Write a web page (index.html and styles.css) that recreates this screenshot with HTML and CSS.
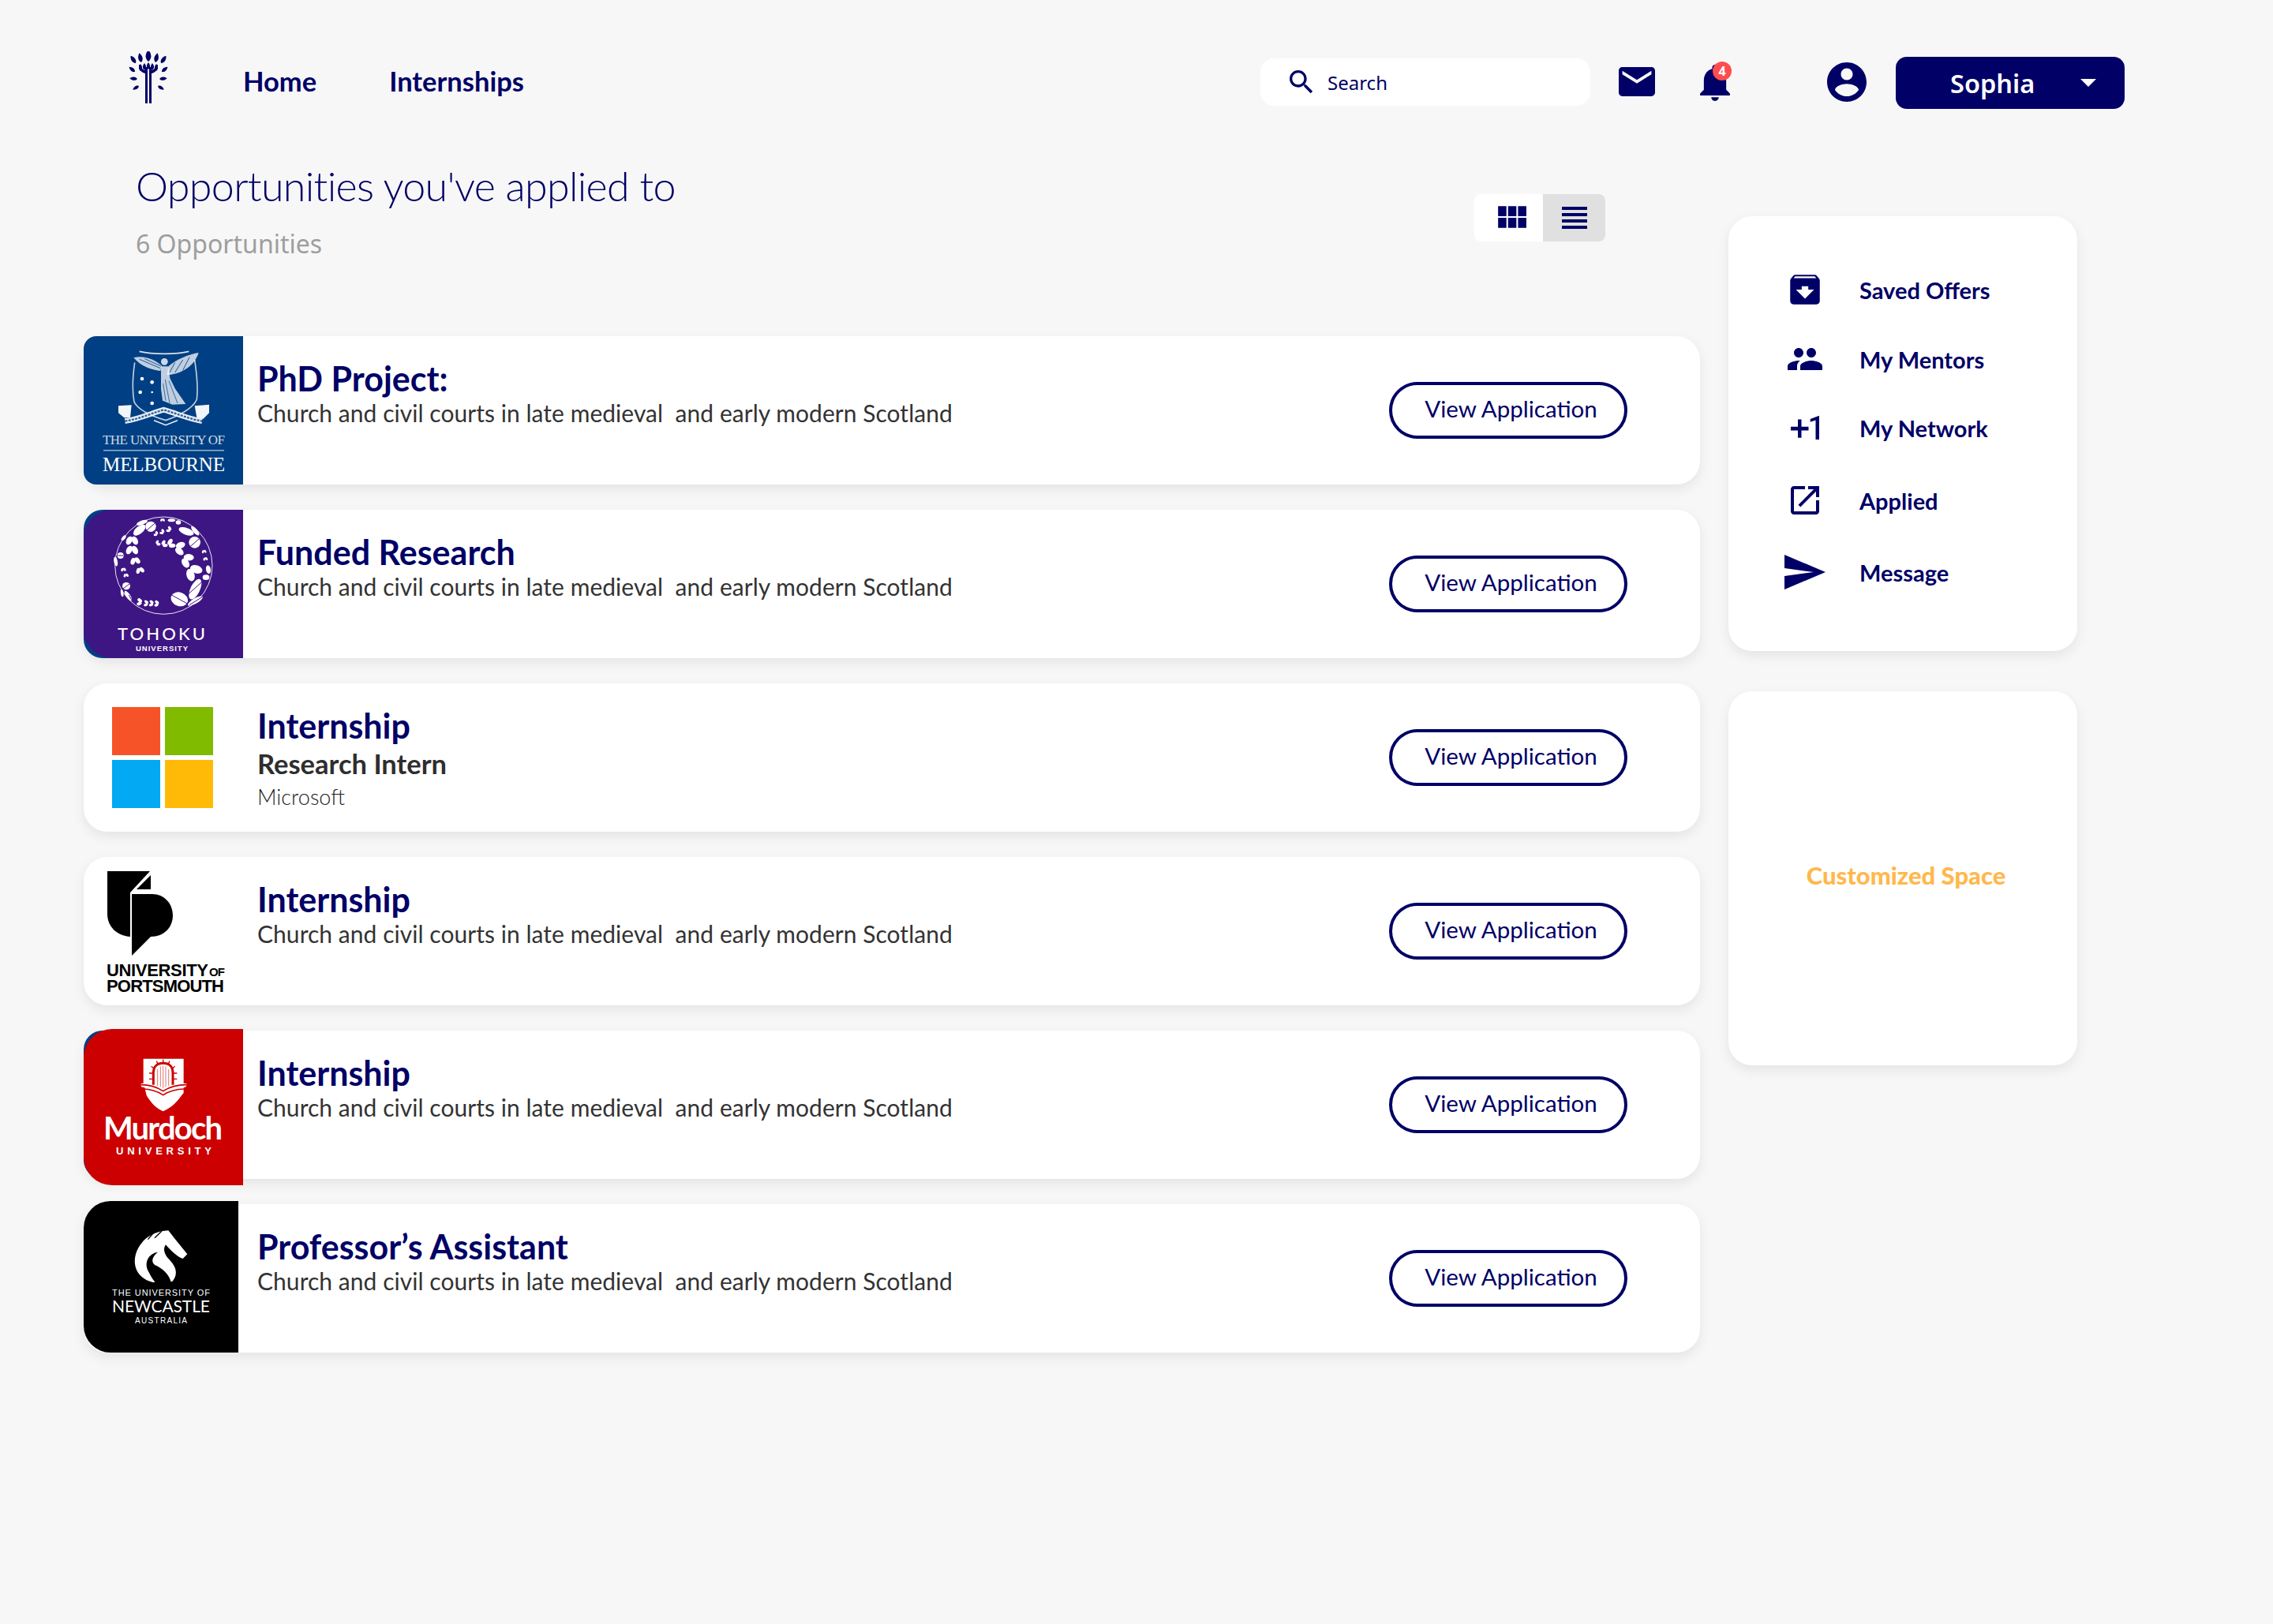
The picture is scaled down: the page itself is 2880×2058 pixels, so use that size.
FILE: index.html
```html
<!DOCTYPE html>
<html lang="en">
<head>
    <meta charset="UTF-8">
    <meta name="viewport" content="width=device-width, initial-scale=1.0">
    <title>Opportunities you've applied to</title>
    <link rel="stylesheet" href="styles.css">
</head>
<body>

    <svg class="defs" width="0" height="0">
        <defs>
            <path id="flame" d="M0 0C-5 -4 -4 -10 0 -15C4 -10 5 -4 0 0Z"/>
            <g id="heart">
                <ellipse cx="-9" cy="-11" rx="9" ry="14" transform="rotate(-28 -9 -11)"/>
                <ellipse cx="9" cy="-11" rx="9" ry="14" transform="rotate(28 9 -11)"/>
            </g>
        </defs>
    </svg>

    <header class="topbar">
        <a class="brand" href="#">
            <svg width="52" height="66" viewBox="0 0 52 66" fill="#000066">
                <path d="M22 66V28C17 27 14 23 14 17H17C17 21 19 24 22 24V20H25V66ZM27 66V20H30V24C33 24 35 21 35 17H38C38 23 35 27 30 28V66Z"/>
                <use href="#flame" transform="translate(26 13)"/>
                <use href="#flame" transform="translate(17 14) rotate(-12) scale(.8)"/>
                <use href="#flame" transform="translate(35 14) rotate(12) scale(.8)"/>
                <use href="#flame" transform="translate(10 15) rotate(-35) scale(.75)"/>
                <use href="#flame" transform="translate(42 15) rotate(35) scale(.75)"/>
                <use href="#flame" transform="translate(21 24) scale(.6)"/>
                <use href="#flame" transform="translate(26 23) scale(.6)"/>
                <use href="#flame" transform="translate(31 24) scale(.6)"/>
                <use href="#flame" transform="translate(16 25) scale(.6)"/>
                <use href="#flame" transform="translate(36 25) scale(.6)"/>
                <use href="#flame" transform="translate(9 26) rotate(-50) scale(.65)"/>
                <use href="#flame" transform="translate(43 26) rotate(50) scale(.65)"/>
                <use href="#flame" transform="translate(12 35) rotate(-85) scale(.65)"/>
                <use href="#flame" transform="translate(40 35) rotate(85) scale(.65)"/>
                <use href="#flame" transform="translate(14 44) rotate(-120) scale(.6)"/>
                <use href="#flame" transform="translate(38 44) rotate(120) scale(.6)"/>
            </svg>
        </a>
        <nav class="main-nav">
            <a href="#">Home</a>
            <a href="#">Internships</a>
        </nav>
        <label class="search">
            <svg width="40" height="40" viewBox="0 0 24 24" fill="#000066"><path d="M15.5 14h-.79l-.28-.27C15.41 12.59 16 11.11 16 9.5 16 5.91 13.09 3 9.5 3S3 5.91 3 9.5 5.91 16 9.5 16c1.61 0 3.09-.59 4.23-1.57l.27.28v.79l5 4.99L20.49 19l-4.99-5zm-6 0C7.01 14 5 11.99 5 9.5S7.01 5 9.5 5 14 7.01 14 9.5 11.99 14 9.5 14z"/></svg>
            <span>Search</span>
        </label>
        <a class="icon-mail" href="#">
            <svg width="46" height="37" viewBox="2 4 20 16" fill="#000066"><path d="M20 4H4c-1.1 0-1.99.9-1.99 2L2 18c0 1.1.9 2 2 2h16c1.1 0 2-.9 2-2V6c0-1.1-.9-2-2-2zm0 4l-8 5-8-5V6l8 5 8-5v2z"/></svg>
        </a>
        <a class="icon-bell" href="#">
            <svg width="38" height="46" viewBox="4 2.5 16 19.5" fill="#000066"><path d="M12 22c1.1 0 2-.9 2-2h-4c0 1.1.89 2 2 2zm6-6v-5c0-3.07-1.64-5.64-4.5-6.32V4c0-.83-.67-1.5-1.5-1.5s-1.5.67-1.5 1.5v.68C7.63 5.36 6 7.92 6 11v5l-2 2v1h16v-1l-2-2z"/></svg>
            <span class="badge">4</span>
        </a>
        <a class="icon-user" href="#">
            <svg width="50" height="50" viewBox="2 2 20 20" fill="#000066"><path d="M12 2C6.48 2 2 6.48 2 12s4.48 10 10 10 10-4.48 10-10S17.52 2 12 2zm0 3c1.66 0 3 1.34 3 3s-1.34 3-3 3-3-1.34-3-3 1.34-3 3-3zm0 14.2c-2.5 0-4.71-1.28-6-3.22.03-1.99 4-3.08 6-3.08 1.99 0 5.97 1.09 6 3.08-1.29 1.94-3.5 3.22-6 3.22z"/></svg>
        </a>
        <button class="user-menu">
            <span>Sophia</span>
            <i class="caret"></i>
        </button>
    </header>

    <div class="layout">
        <main class="content">
            <div class="page-head">
                <div>
                    <h1>Opportunities you've applied to</h1>
                    <p class="count">6 Opportunities</p>
                </div>
                <div class="view-toggle">
                    <span class="toggle-btn grid-btn">
                        <svg width="40" height="40" viewBox="2.5 2.5 19 19" fill="#000066"><path d="M4 11h5V5H4v6zm0 7h5v-6H4v6zm6 0h5v-6h-5v6zm6 0h5v-6h-5v6zm-6-7h5V5h-5v6zm6-6v6h5V5h-5z"/></svg>
                    </span>
                    <span class="toggle-btn active">
                        <svg width="40" height="40" viewBox="2 2 20 20" fill="#000066"><path d="M4 15h16v-2H4v2zm0 4h16v-2H4v2zm0-8h16V9H4v2zm0-6v2h16V5H4z"/></svg>
                    </span>
                </div>
            </div>

            <article class="card">
                <div class="logo">
                    <svg class="logo-art melbourne" width="202" height="188" viewBox="0 0 202 188" fill="#fff">
                        <g transform="translate(44 10) scale(.3333)">
                            <path d="M62 70C55 120 52 180 60 220C75 250 130 275 180 290C225 275 285 245 298 210C305 150 295 100 290 60" fill="none" stroke="#fff" stroke-width="5" opacity=".75"/>
                            <path d="M80 28C130 40 220 40 268 28" fill="none" stroke="#fff" stroke-width="5" opacity=".85"/>
                            <path d="M58 52C90 42 135 55 165 82L160 102C130 100 85 85 58 52Z" opacity=".75"/>
                            <path d="M305 33C270 38 220 58 190 85L185 118C225 115 285 95 305 33Z" opacity=".75"/>
                            <path d="M80 58L160 92M100 56L162 84M215 70L195 108M245 60L215 108M270 50L245 100" fill="none" stroke="#003f83" stroke-width="2.5"/>
                            <circle cx="175" cy="67" r="13" opacity=".8"/>
                            <path d="M162 85L190 85L196 130L216 170L256 228L205 230L168 215L162 170Z" opacity=".75"/>
                            <path d="M178 135L195 225M192 140L225 225M170 150L180 215" fill="none" stroke="#003f83" stroke-width="3" opacity=".7"/>
                            <circle cx="90" cy="132" r="7"/><circle cx="128" cy="145" r="7"/><circle cx="83" cy="183" r="7"/><circle cx="128" cy="183" r="4"/><circle cx="128" cy="225" r="7"/>
                            <path d="M0 235L50 232L45 280L22 280L0 262ZM290 235L345 230L345 262L322 285L298 280Z" opacity=".95"/>
                            <path d="M25 293C80 285 120 265 172 250C225 265 270 285 318 293" fill="none" stroke="#fff" stroke-width="20" opacity=".9"/>
                            <path d="M25 293C80 285 120 265 172 250C225 265 270 285 318 293" fill="none" stroke="#003f83" stroke-width="7" stroke-dasharray="9 4" opacity=".8"/>
                            <path d="M135 290L180 308L225 290" fill="none" stroke="#fff" stroke-width="5" opacity=".9"/>
                        </g>
                        <text x="24" y="137" font-size="17" textLength="155" font-family="Liberation Serif" opacity=".8">THE UNIVERSITY OF</text>
                        <rect x="25" y="144" width="153" height="1.5" opacity=".6"/>
                        <text x="24" y="171" font-size="25" textLength="155" font-family="Liberation Serif">MELBOURNE</text>
                    </svg>
                </div>
                <div class="card-body">
                    <h2>PhD Project:</h2>
                    <p class="desc">Church and civil courts in late medieval&nbsp; and early modern Scotland</p>
                </div>
                <a class="view-btn" href="#">View Application</a>
            </article>

            <article class="card">
                <div class="logo">
                    <svg class="logo-art tohoku" width="202" height="188" viewBox="0 0 202 188" fill="#fff">
                        <g transform="translate(24 4) scale(.3333)">
                            <circle cx="232" cy="200" r="185" fill="none" stroke="#fff" stroke-width="3" opacity=".9"/>
                            <ellipse cx="183" cy="52" rx="20" ry="20"/>
                            <ellipse cx="350" cy="112" rx="22" ry="22"/>
                            <ellipse cx="292" cy="328" rx="33" ry="26" transform="rotate(20 292 328)"/>
                            <ellipse cx="90" cy="278" rx="15" ry="14"/>
                            <ellipse cx="68" cy="162" rx="12" ry="12"/>
                            <ellipse cx="140" cy="65" rx="28" ry="14" transform="rotate(-40 140 65)"/>
                            <ellipse cx="150" cy="37" rx="22" ry="8" transform="rotate(-20 150 37)"/>
                            <ellipse cx="318" cy="70" rx="30" ry="13" transform="rotate(20 318 70)"/>
                            <ellipse cx="352" cy="68" rx="22" ry="8" transform="rotate(50 352 68)"/>
                            <ellipse cx="352" cy="290" rx="42" ry="18" transform="rotate(-65 352 290)"/>
                            <ellipse cx="352" cy="335" rx="32" ry="10" transform="rotate(-30 352 335)"/>
                            <ellipse cx="97" cy="315" rx="22" ry="8" transform="rotate(55 97 315)"/>
                            <ellipse cx="74" cy="305" rx="14" ry="5" transform="rotate(80 74 305)"/>
                            <ellipse cx="50" cy="185" rx="18" ry="7" transform="rotate(80 50 185)"/>
                            <ellipse cx="402" cy="215" rx="16" ry="9" transform="rotate(80 402 215)"/>
                            <ellipse cx="393" cy="245" rx="13" ry="10"/>
                            <ellipse cx="80" cy="95" rx="12" ry="6" transform="rotate(-50 80 95)"/>
                            <ellipse cx="262" cy="28" rx="14" ry="6"/>
                            <ellipse cx="288" cy="36" rx="10" ry="8"/>
                            <use href="#heart" transform="translate(112 92) rotate(180) scale(1.2)"/>
                            <use href="#heart" transform="translate(112 128) rotate(180) scale(1.2)"/>
                            <use href="#heart" transform="translate(122 172) rotate(170) scale(.95)"/>
                            <use href="#heart" transform="translate(140 210) rotate(165) scale(.8)"/>
                            <use href="#heart" transform="translate(208 82) rotate(-60) scale(.5)"/>
                            <use href="#heart" transform="translate(232 75) rotate(-60) scale(.55)"/>
                            <use href="#heart" transform="translate(258 66) rotate(-60) scale(.6)"/>
                            <use href="#heart" transform="translate(205 118) rotate(60) scale(.55)"/>
                            <use href="#heart" transform="translate(228 122) rotate(60) scale(.7)"/>
                            <use href="#heart" transform="translate(252 122) rotate(60) scale(.9)"/>
                            <use href="#heart" transform="translate(280 132) rotate(100) scale(1.3)"/>
                            <use href="#heart" transform="translate(308 172) rotate(120) scale(1.4)"/>
                            <use href="#heart" transform="translate(332 212) rotate(135) scale(1.7)"/>
                            <use href="#heart" transform="translate(172 345) rotate(-80) scale(.6)"/>
                            <use href="#heart" transform="translate(192 345) rotate(-80) scale(.6)"/>
                            <use href="#heart" transform="translate(212 346) rotate(-80) scale(.6)"/>
                            <use href="#heart" transform="translate(148 340) rotate(-80) scale(.7)"/>
                            <use href="#heart" transform="translate(78 210) rotate(170) scale(.5)"/>
                            <use href="#heart" transform="translate(88 232) rotate(170) scale(.5)"/>
                            <use href="#heart" transform="translate(385 142) rotate(170) scale(.45)"/>
                            <use href="#heart" transform="translate(390 170) rotate(170) scale(.45)"/>
                            <use href="#heart" transform="translate(228 22) rotate(180) scale(.45)"/>
                            <path d="M168 66L198 40M333 128L367 98M262 312L322 345M78 288L102 270M58 162H78M322 312L378 262M330 350L378 320M100 312L110 330" fill="none" stroke="#3e1683" stroke-width="3"/>
                        </g>
                        <text x="43" y="165" font-size="22" textLength="111" font-family="Lato, Liberation Sans" font-weight="500">TOHOKU</text>
                        <text x="66" y="179" font-size="9.5" textLength="66" font-family="Liberation Sans" font-weight="700">UNIVERSITY</text>
                    </svg>
                </div>
                <div class="card-body">
                    <h2>Funded Research</h2>
                    <p class="desc">Church and civil courts in late medieval&nbsp; and early modern Scotland</p>
                </div>
                <a class="view-btn" href="#">View Application</a>
            </article>

            <article class="card">
                <div class="logo plain">
                    <svg class="logo-art" width="202" height="188" viewBox="0 0 202 188">
                        <rect x="36" y="30" width="61" height="61" fill="#f65428"/>
                        <rect x="103" y="30" width="61" height="61" fill="#80bb00"/>
                        <rect x="36" y="97" width="61" height="61" fill="#03a9f2"/>
                        <rect x="103" y="97" width="61" height="61" fill="#ffba08"/>
                    </svg>
                </div>
                <div class="card-body">
                    <h2>Internship</h2>
                    <p class="role">Research Intern</p>
                    <p class="company">Microsoft</p>
                </div>
                <a class="view-btn" href="#">View Application</a>
            </article>

            <article class="card">
                <div class="logo plain">
                    <svg class="logo-art" width="202" height="188" viewBox="0 0 202 188" fill="#000">
                        <path d="M30 18H84L59 45V101C42 100 30 88 30 72Z"/>
                        <path d="M85 23V41H67Z"/>
                        <path d="M61 47H87C102 47 113 59 113 74C113 89 102 101 85 101L61 125Z"/>
                        <text x="29" y="151" font-size="22" textLength="129" font-family="Liberation Sans" font-weight="700">UNIVERSITY</text>
                        <text x="159" y="151" font-size="15" textLength="20" font-family="Liberation Sans" font-weight="700">OF</text>
                        <text x="29" y="171" font-size="22" textLength="149" font-family="Liberation Sans" font-weight="700">PORTSMOUTH</text>
                    </svg>
                </div>
                <div class="card-body">
                    <h2>Internship</h2>
                    <p class="desc">Church and civil courts in late medieval&nbsp; and early modern Scotland</p>
                </div>
                <a class="view-btn" href="#">View Application</a>
            </article>

            <article class="card">
                <div class="logo">
                    <svg class="logo-art murdoch" width="202" height="198" viewBox="0 0 202 198" fill="#fff">
                        <g transform="translate(59 36) scale(.3333)">
                            <path d="M50 5H203V98L215 100L212 112L203 115V135L195 145C175 175 150 195 125 205C100 195 80 175 62 145L55 115L42 112L40 100L50 98Z"/>
                            <path d="M88 104V60C88 32 105 22 125 22C145 22 162 32 162 60V104" fill="none" stroke="#c00" stroke-width="9"/>
                            <path d="M104 108V45M115 112V34M125 116V32M135 112V34M146 108V45" fill="none" stroke="#c00" stroke-width="3" opacity=".55"/>
                            <path d="M125 8V20M100 14L106 26M150 14L144 26M80 34L90 42M170 34L160 42M72 60H86M178 60H164M72 82H86M178 82H164" fill="none" stroke="#c00" stroke-width="4"/>
                            <path d="M40 104C75 104 105 115 125 128C145 115 175 104 215 104" fill="none" stroke="#c00" stroke-width="5"/>
                            <path d="M48 120C80 120 105 130 125 143C145 130 170 120 206 120" fill="none" stroke="#c00" stroke-width="5"/>
                        </g>
                        <text x="25" y="140" font-size="40" textLength="151" font-family="Lato, Liberation Sans" font-weight="700">Murdoch</text>
                        <text x="41" y="159" font-size="13" textLength="121" font-family="Liberation Sans" font-weight="700">UNIVERSITY</text>
                    </svg>
                </div>
                <div class="card-body">
                    <h2>Internship</h2>
                    <p class="desc">Church and civil courts in late medieval&nbsp; and early modern Scotland</p>
                </div>
                <a class="view-btn" href="#">View Application</a>
            </article>

            <article class="card">
                <div class="logo narrow">
                    <svg class="logo-art newcastle" width="196" height="192" viewBox="0 0 196 192" fill="#fff">
                        <g transform="translate(44 28) scale(.3333)">
                            <path d="M190 28C150 30 110 45 85 80C55 120 55 170 85 200C100 215 118 222 135 225L205 222C232 190 215 160 190 135C172 115 170 95 180 82C200 105 225 130 245 135L262 118L215 60Z"/>
                            <path d="M150 110C115 115 95 150 115 185C122 200 130 212 140 226L200 226C195 195 165 170 140 160C125 150 125 130 150 110Z" fill="#000"/>
                            <path d="M140 30L112 62M165 30L138 56" fill="none" stroke="#000" stroke-width="4"/>
                        </g>
                        <text x="36" y="120" font-size="11" textLength="124" font-family="Liberation Sans">THE UNIVERSITY OF</text>
                        <text x="36" y="141" font-size="21" textLength="124" font-family="Lato, Liberation Sans">NEWCASTLE</text>
                        <text x="65" y="155" font-size="10" textLength="66" font-family="Liberation Sans">AUSTRALIA</text>
                    </svg>
                </div>
                <div class="card-body wide">
                    <h2>Professor’s Assistant</h2>
                    <p class="desc">Church and civil courts in late medieval&nbsp; and early modern Scotland</p>
                </div>
                <a class="view-btn" href="#">View Application</a>
            </article>
        </main>

        <aside class="sidebar">
            <div class="side-card side-menu">
                <a href="#">
                    <span class="side-icon"><svg width="50" height="50" viewBox="0 0 24 24" fill="#000066"><path d="M20.54 5.23l-1.39-1.68C18.88 3.21 18.47 3 18 3H6c-.47 0-.88.21-1.16.55L3.46 5.23C3.17 5.57 3 6.02 3 6.5V19c0 1.1.9 2 2 2h14c1.1 0 2-.9 2-2V6.5c0-.48-.17-.93-.46-1.27zM12 17.5L6.5 12H10v-2h4v2h3.5L12 17.5zM5.12 5l.81-1h12l.94 1H5.12z"/></svg></span>
                    Saved Offers
                </a>
                <a href="#">
                    <span class="side-icon"><svg class="flip" width="48" height="48" viewBox="0 0 24 24" fill="#000066"><path d="M16 11c1.66 0 2.99-1.34 2.99-3S17.66 5 16 5c-1.66 0-3 1.34-3 3s1.34 3 3 3zm-8 0c1.66 0 2.99-1.34 2.99-3S9.66 5 8 5C6.34 5 5 6.34 5 8s1.34 3 3 3zm0 2c-2.33 0-7 1.17-7 3.5V19h14v-2.5c0-2.33-4.67-3.5-7-3.5zm8 0c-.29 0-.62.02-.97.05 1.16.84 1.97 1.97 1.97 3.45V19h6v-2.5c0-2.33-4.67-3.5-7-3.5z"/></svg></span>
                    My Mentors
                </a>
                <a href="#">
                    <span class="side-icon"><svg width="36" height="30" viewBox="4 5 16 13" preserveAspectRatio="none" fill="#000066"><path d="M10 7H8v4H4v2h4v4h2v-4h4v-2h-4V7zm10 11h-2V7.38L15 8.4V6.7L19.7 5h.3v13z"/></svg></span>
                    My Network
                </a>
                <a href="#">
                    <span class="side-icon"><svg width="38" height="38" viewBox="2.5 2.5 19 19" fill="#000066"><path d="M19 19H5V5h7V3H5c-1.11 0-2 .9-2 2v14c0 1.1.89 2 2 2h14c1.1 0 2-.9 2-2v-7h-2v7zM14 3v2h3.59l-9.83 9.83 1.41 1.41L19 6.41V10h2V3h-7z"/></svg></span>
                    Applied
                </a>
                <a href="#">
                    <span class="side-icon"><svg width="52" height="44" viewBox="2 3 21 18" preserveAspectRatio="none" fill="#000066"><path d="M2.01 21L23 12 2.01 3 2 10l15 2-15 2z"/></svg></span>
                    Message
                </a>
            </div>
            <div class="side-card custom-space">
                <span>Customized Space</span>
            </div>
        </aside>
    </div>

</body>
</html>
```

FILE: styles.css
```css
* {
    box-sizing: border-box;
}

body {
    margin: 0;
    width: 2880px;
    min-height: 2058px;
    background-color: #f7f7f7;
    color: #000066;
    font-family: "Lato", "Liberation Sans", sans-serif;
}

a {
    color: inherit;
    text-decoration: none;
}

.defs {
    position: absolute;
}

/* top bar */
.topbar {
    display: flex;
    align-items: center;
    height: 208px;
    padding: 0 188px 0 162px;
}

.brand {
    display: flex;
    margin-top: -12px;
}

.main-nav {
    display: flex;
    gap: 92px;
    margin-left: 94px;
    margin-top: -3px;
    font-size: 34.5px;
    font-weight: 700;
}

.search {
    display: flex;
    align-items: center;
    gap: 13px;
    width: 418px;
    height: 60px;
    margin-left: auto;
    padding-left: 32px;
    border-radius: 18px;
    background-color: #fff;
    font-family: "Noto Sans", sans-serif;
    font-size: 24px;
}

.icon-mail {
    display: flex;
    margin-left: 36px;
    margin-top: -2px;
}

.icon-bell {
    position: relative;
    display: flex;
    margin-left: 57px;
    margin-top: 2px;
}

.badge {
    position: absolute;
    top: -4px;
    right: -2px;
    width: 24px;
    height: 24px;
    border-radius: 50%;
    background-color: #ff4d4f;
    color: #fff;
    font-family: "Noto Sans", sans-serif;
    font-size: 16px;
    font-weight: 700;
    line-height: 24px;
    text-align: center;
}

.icon-user {
    display: flex;
    margin-left: 123px;
}

.user-menu {
    display: flex;
    align-items: center;
    width: 290px;
    height: 66px;
    margin-left: 37px;
    margin-top: 2px;
    padding: 0 36px 0 69px;
    border: none;
    border-radius: 14px;
    background-color: #000066;
    color: #fff;
    font-family: "Noto Sans", sans-serif;
    font-size: 32.5px;
    font-weight: 600;
}

.caret {
    width: 0;
    height: 0;
    margin-left: auto;
    border-style: solid;
    border-width: 10px 10px 0;
    border-color: #fff transparent transparent;
}

/* page */
.layout {
    display: flex;
    align-items: flex-start;
    padding-left: 106px;
}

.content {
    width: 2048px;
}

.page-head {
    display: flex;
    justify-content: space-between;
    height: 218px;
    padding: 0 120px 0 66px;
}

h1 {
    margin: -3px 0 0;
    font-size: 52px;
    font-weight: 300;
    letter-spacing: -0.7px;
    line-height: 60px;
}

.count {
    margin: 21px 0 0;
    color: #9e9e9e;
    font-family: "Noto Sans", sans-serif;
    font-size: 32px;
    font-weight: 400;
    line-height: 46px;
}

.view-toggle {
    display: flex;
    height: 60px;
    margin-top: 38px;
    border-radius: 8px;
    background-color: #fff;
    overflow: hidden;
}

.toggle-btn {
    display: flex;
    align-items: center;
    justify-content: center;
    width: 87px;
}

.grid-btn {
    padding-left: 6px;
}

.toggle-btn.active {
    width: 79px;
    background-color: #e0e0e0;
}

/* opportunity cards */
.card {
    display: flex;
    align-items: center;
    height: 188px;
    margin-bottom: 32px;
    border-radius: 30px;
    background-color: #fff;
    box-shadow: 0 6px 16px rgba(0, 0, 0, 0.08);
}

.logo {
    flex: none;
    width: 202px;
    height: 188px;
    border-radius: 24px 0 0 24px;
    background-color: #003f83;
}

.logo.plain {
    background-color: transparent;
}

.logo.narrow {
    width: 196px;
    background-color: transparent;
}

.logo-art {
    display: block;
}

.melbourne {
    border-radius: 16px 0 0 16px;
    background-color: #003f83;
}

.tohoku {
    border-radius: 36px 0 0 36px;
    background-color: #3e1683;
}

.murdoch {
    margin-top: -2px;
    border-radius: 36px 0 0 36px;
    background-color: #cc0000;
}

.newcastle {
    margin-top: -4px;
    border-radius: 34px 0 0 34px;
    background-color: #000;
}

.card-body {
    flex: 1;
    align-self: flex-start;
    padding: 26px 0 0 18px;
}

.card-body.wide {
    padding-left: 24px;
}

h2 {
    margin: 0;
    font-size: 43px;
    font-weight: 700;
    line-height: 56px;
}

.desc {
    margin: 0;
    color: #333;
    font-size: 30px;
    letter-spacing: 0.04px;
    line-height: 30px;
}

.role {
    margin: 0;
    color: #2e2e2e;
    font-size: 34.5px;
    font-weight: 700;
    line-height: 40px;
}

.company {
    margin: 4px 0 0;
    color: #222;
    font-size: 27px;
    font-weight: 300;
    line-height: 36px;
}

.view-btn {
    flex: none;
    width: 302px;
    height: 72px;
    margin-right: 92px;
    padding-left: 7px;
    border: 4px solid #000066;
    border-radius: 36px;
    font-size: 29.5px;
    line-height: 60px;
    text-align: center;
}

/* sidebar */
.sidebar {
    width: 442px;
    margin: 66px 0 0 36px;
}

.side-card {
    border-radius: 30px;
    background-color: #fff;
    box-shadow: 0 6px 16px rgba(0, 0, 0, 0.08);
}

.side-menu {
    display: flex;
    flex-direction: column;
    height: 551px;
    margin-bottom: 51px;
    padding: 49px 0 0 70px;
    font-size: 29px;
    font-weight: 700;
}

.side-menu a {
    display: flex;
    align-items: center;
    height: 88px;
}

.side-menu a:nth-child(3) {
    margin-top: -1px;
}

.side-menu a:nth-child(4) {
    margin-top: 4px;
}

.side-menu a:nth-child(5) {
    margin-top: 3px;
}

.side-icon {
    display: flex;
    justify-content: center;
    width: 54px;
    margin-right: 42px;
}

.flip {
    transform: scaleX(-1);
}

.custom-space {
    display: flex;
    justify-content: center;
    height: 474px;
    padding: 214px 0 0 8px;
    color: #ffb84d;
    font-size: 31px;
    font-weight: 900;
}
```
